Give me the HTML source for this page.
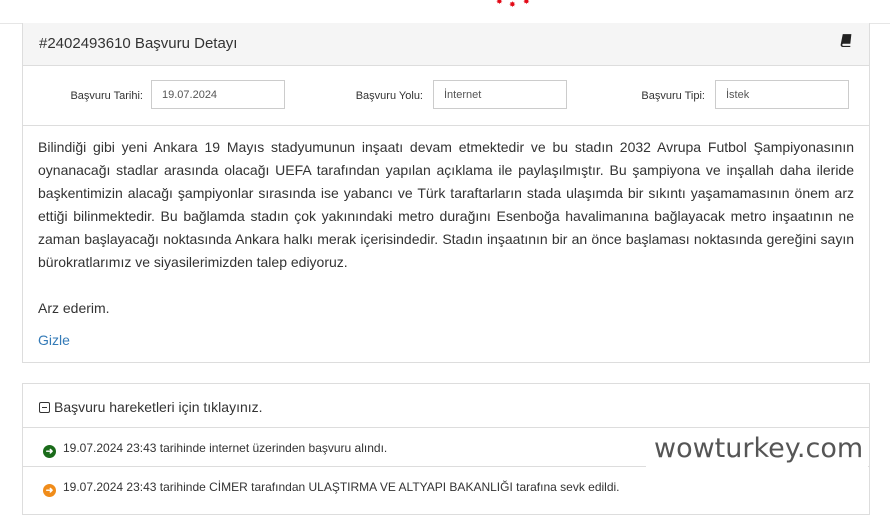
<!DOCTYPE html>
<html><head><meta charset="utf-8"><style>
body{margin:0;width:890px;height:506px;overflow:hidden;background:#fff;font-family:"Liberation Sans",sans-serif;color:#333;position:relative}
.top{position:absolute;left:0;top:0;width:890px;height:23px;border-bottom:1px solid #e6e6e6;background:#fff}
.star{position:absolute;color:#e30a17;font-size:8px}
.p1{position:absolute;left:22px;top:23px;width:846px;height:339px;border:1px solid #ddd;border-top:none}
.hd{height:42px;background:#f5f5f5;border-bottom:1px solid #ddd;position:relative}
.hd span{position:absolute;left:16px;top:12px;font-size:15px;color:#333}
.form{height:59px;border-bottom:1px solid #ddd;position:relative;font-size:11px}
.lbl{position:absolute;top:24px;color:#333;text-align:right;width:120px}
.inp{position:absolute;top:14px;width:134px;height:29px;border:1px solid #ccc;box-sizing:border-box;padding:8px 0 0 10px;font-size:11px;color:#555}
.txt{position:absolute;left:38px;top:136px;width:816px;font-size:14px;line-height:23px;color:#333}
.txt div{text-align:justify;text-align-last:justify;white-space:nowrap;overflow:hidden}
.txt div.l{text-align-last:left}
.p2{position:absolute;left:22px;top:383px;width:846px;height:130px;border:1px solid #ddd}
.r{position:absolute;left:0;width:846px;border-bottom:1px solid #ddd;font-size:12px}
.ic{display:inline-block;width:13px;height:13px;border-radius:50%;color:#fff;font-size:9px;line-height:13px;text-align:center;vertical-align:-2px;margin-right:7px;font-weight:bold}
.wm{position:absolute;left:646px;top:430px;width:222px;height:37px;background:#fff;color:#555;font-family:"DejaVu Sans","Liberation Sans",sans-serif;font-size:27px;line-height:37px;padding-left:8px;box-sizing:border-box}
</style></head><body>
<div class="top"><span class="star" style="left:496px;top:-3px">✸</span><span class="star" style="left:509px;top:0px">✸</span><span class="star" style="left:523px;top:-3px">✸</span></div>
<div class="p1">
<div class="hd"><span>#2402493610 Başvuru Detayı</span><svg style="position:absolute;right:16px;top:10px" width="14" height="14" viewBox="0 0 12 13"><path d="M3 1h8l-1 9H3.5a1 1 0 0 0 0 2h6.5v1H3a2 2 0 0 1-2-2z" fill="#222"/></svg></div>
<div class="form">
<span class="lbl" style="left:0px">Başvuru Tarihi:</span><div class="inp" style="left:128px">19.07.2024</div>
<span class="lbl" style="left:280px">Başvuru Yolu:</span><div class="inp" style="left:410px">İnternet</div>
<span class="lbl" style="left:562px">Başvuru Tipi:</span><div class="inp" style="left:692px">İstek</div>
</div>
</div>
<div class="txt">
<div>Bilindiği gibi yeni Ankara 19 Mayıs stadyumunun inşaatı devam etmektedir ve bu stadın 2032 Avrupa Futbol Şampiyonasının</div>
<div>oynanacağı stadlar arasında olacağı UEFA tarafından yapılan açıklama ile paylaşılmıştır. Bu şampiyona ve inşallah daha ileride</div>
<div>başkentimizin alacağı şampiyonlar sırasında ise yabancı ve Türk taraftarların stada ulaşımda bir sıkıntı yaşamamasının önem arz</div>
<div>ettiği bilinmektedir. Bu bağlamda stadın çok yakınındaki metro durağını Esenboğa havalimanına bağlayacak metro inşaatının ne</div>
<div>zaman başlayacağı noktasında Ankara halkı merak içerisindedir. Stadın inşaatının bir an önce başlaması noktasında gereğini sayın</div>
<div class="l">bürokratlarımız ve siyasilerimizden talep ediyoruz.</div>
<div class="l">&nbsp;</div>
<div class="l">Arz ederim.</div>
<div class="l" style="margin-top:9px;color:#337ab7">Gizle</div>
</div>
<div class="p2">
<div class="r" style="top:0;height:44px;font-size:14px;line-height:46px;padding-left:16px;box-sizing:border-box"><span style="display:inline-block;width:9px;height:9px;border:1px solid #333;border-radius:2px;vertical-align:-1px;position:relative;margin-right:4px"><span style="position:absolute;left:2px;top:4px;width:5px;height:1px;background:#333"></span></span>Başvuru hareketleri için tıklayınız.</div>
<div class="r" style="top:45px;height:38px;line-height:38px;padding-left:20px;box-sizing:border-box"><span class="ic" style="background:#1a6b1a">➜</span>19.07.2024 23:43 tarihinde internet üzerinden başvuru alındı.</div>
<div class="r" style="top:84px;height:38px;line-height:38px;padding-left:20px;box-sizing:border-box;border:none"><span class="ic" style="background:#f08c1a">➜</span>19.07.2024 23:43 tarihinde CİMER tarafından ULAŞTIRMA VE ALTYAPI BAKANLIĞI tarafına sevk edildi.</div>
</div>
<div class="wm">wowturkey.com</div>
</body></html>
